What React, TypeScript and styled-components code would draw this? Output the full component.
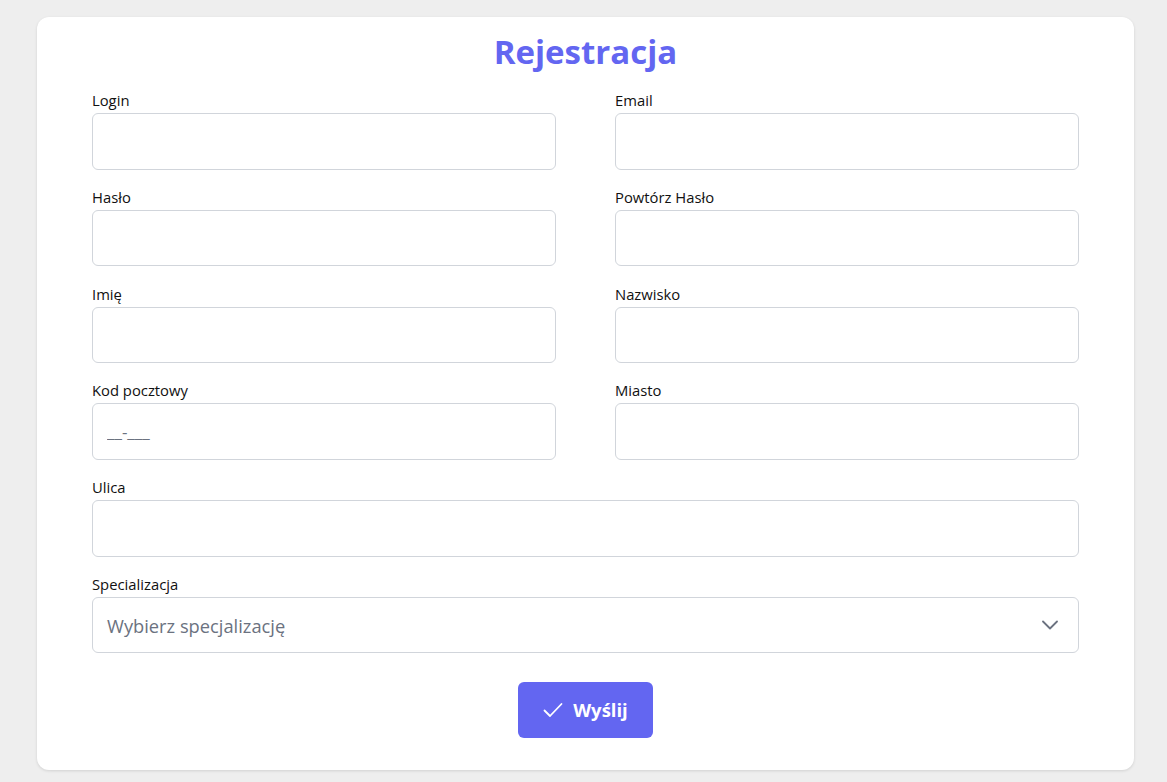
import React from "react";
import styled, { createGlobalStyle } from "styled-components";

const Global = createGlobalStyle`
  html, body { margin: 0; padding: 0; background: #eeeeee; }
  body { font-family: "Open Sans", "Noto Sans", sans-serif; color: #1f2328; }
  * { box-sizing: border-box; }
`;

const Page = styled.div`
  display: flex;
  justify-content: center;
  padding: 17px 33px 12px 37px;
`;

const Card = styled.form`
  flex: 1;
  background: #ffffff;
  border-radius: 12px;
  box-shadow: 0 1px 3px rgba(0, 0, 0, 0.12);
  padding: 14px 55px 32px 55px;
  display: flex;
  flex-direction: column;
`;

const Title = styled.h1`
  margin: 0 0 18px 0;
  text-align: center;
  color: #6366f1;
  font-size: 33px;
  line-height: 42px;
  font-weight: 700;
`;

const Grid = styled.div`
  display: grid;
  grid-template-columns: 1fr 1fr;
  column-gap: 59px;
  row-gap: 18.3px;
`;

const Field = styled.div<{ $full?: boolean }>`
  display: flex;
  flex-direction: column;
  gap: 4px;
  grid-column: ${(p) => (p.$full ? "1 / -1" : "auto")};
`;

const Label = styled.label`
  font-size: 14.8px;
  line-height: 18px;
  color: #111111;
`;

const Input = styled.input`
  height: 56.5px;
  width: 100%;
  border: 1px solid #d1d5db;
  border-radius: 6px;
  padding: 0 14px;
  font-family: inherit;
  font-size: 17px;
  color: #4b5563;
  background: #fff;
  outline: none;
  &::placeholder { color: #6b7280; }
`;

const Select = styled.div`
  height: 56.5px;
  border: 1px solid #d1d5db;
  border-radius: 6px;
  padding: 0 20px 0 14px;
  display: flex;
  align-items: center;
  justify-content: space-between;
  font-size: 18.3px;
  color: #6b7280;
  cursor: pointer;
`;

const Actions = styled.div`
  display: flex;
  justify-content: center;
  margin-top: 28.5px;
`;

const Button = styled.button`
  height: 56px;
  width: 135px;
  border: none;
  border-radius: 6px;
  background: #6366f1;
  color: #fff;
  font-family: inherit;
  font-size: 18.5px;
  font-weight: 700;
  display: flex;
  align-items: center;
  justify-content: center;
  gap: 10px;
  cursor: pointer;
`;

const fields: { label: string; placeholder?: string; full?: boolean }[] = [
  { label: "Login" },
  { label: "Email" },
  { label: "Hasło" },
  { label: "Powtórz Hasło" },
  { label: "Imię" },
  { label: "Nazwisko" },
  { label: "Kod pocztowy", placeholder: "__-___" },
  { label: "Miasto" },
  { label: "Ulica", full: true },
];

export default function App() {
  return (
    <>
      <Global />
      <Page>
        <Card onSubmit={(e) => e.preventDefault()}>
          <Title>Rejestracja</Title>
          <Grid>
            {fields.map((f) => (
              <Field key={f.label} $full={f.full}>
                <Label>{f.label}</Label>
                <Input placeholder={f.placeholder} />
              </Field>
            ))}
            <Field $full>
              <Label>Specializacja</Label>
              <Select>
                <span>Wybierz specjalizację</span>
                <svg width="16" height="10" viewBox="0 0 16 10" fill="none">
                  <path d="M1 1.5 L8 8.5 L15 1.5" stroke="#6b7280" strokeWidth="1.8" strokeLinecap="round" strokeLinejoin="round" />
                </svg>
              </Select>
            </Field>
          </Grid>
          <Actions>
            <Button type="submit">
              <svg width="20" height="16" viewBox="0 0 20 16" fill="none">
                <path d="M1.5 8.5 L7 14 L18.5 2" stroke="#fff" strokeWidth="1.8" strokeLinecap="round" strokeLinejoin="round" />
              </svg>
              Wyślij
            </Button>
          </Actions>
        </Card>
      </Page>
    </>
  );
}
